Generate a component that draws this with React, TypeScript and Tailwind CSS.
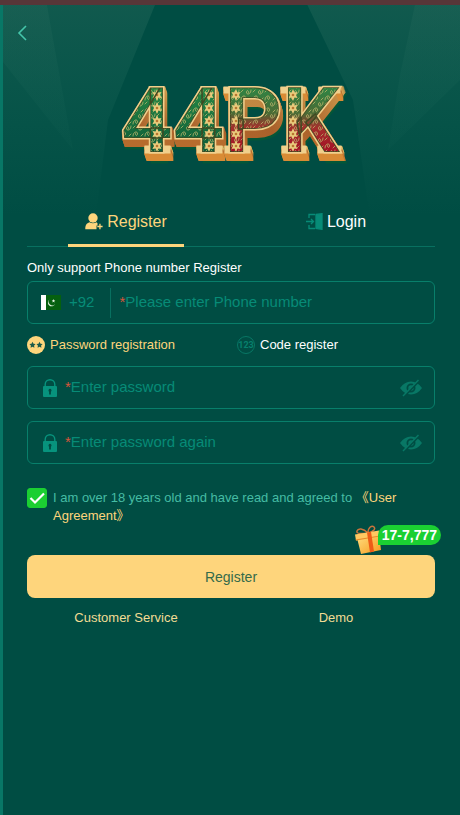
import React, { useState } from 'react';

const FIELD = 'flex h-[43px] items-center rounded-md border border-[#087f6b] text-[15px]';

const Backdrop: React.FC = () => (
  <svg
    className="pointer-events-none absolute inset-x-0 top-0 h-[240px] w-full"
    viewBox="0 0 457 240"
    preserveAspectRatio="none"
    aria-hidden="true"
  >
    <defs>
      <linearGradient id="ray" x1="0" y1="0" x2="0" y2="240" gradientUnits="userSpaceOnUse">
        <stop offset="0" stopColor="#6c9c87" stopOpacity=".16" />
        <stop offset=".5" stopColor="#4f9c84" stopOpacity=".08" />
        <stop offset=".9" stopColor="#4f9c84" stopOpacity="0" />
      </linearGradient>
    </defs>
    <g fill="url(#ray)">
      <path d="M0 0H154L105 120 90 240H0Z" />
      <path d="M0 0H43L70 150 0 62Z" opacity=".5" />
      <path d="M302 0H457V240H370L350 100Z" />
      <path d="M413 0H457V80L385 150 397 75Z" opacity=".5" />
    </g>
  </svg>
);

// x centre of each upright stem in the wordmark
const STEMS = [37, 89, 116, 173];

const Logo: React.FC = () => (
  <svg width="224" height="90" viewBox="0 0 224 90" className="overflow-visible" role="img" aria-label="44PK">
    <defs>
      <linearGradient id="gold" x1="0" y1="0" x2="0" y2="1">
        <stop offset="0" stopColor="#dfb45c" />
        <stop offset=".55" stopColor="#a9602a" />
        <stop offset="1" stopColor="#d98b35" />
      </linearGradient>
      <linearGradient id="green" x1="0" y1="8" x2="0" y2="76" gradientUnits="userSpaceOnUse">
        <stop offset="0" stopColor="#268a45" />
        <stop offset="1" stopColor="#0e5a38" />
      </linearGradient>
      <linearGradient id="greenRed" x1="0" y1="8" x2="0" y2="76" gradientUnits="userSpaceOnUse">
        <stop offset="0" stopColor="#2b8745" />
        <stop offset=".42" stopColor="#4b6b35" />
        <stop offset=".62" stopColor="#a2302c" />
        <stop offset="1" stopColor="#a50d25" />
      </linearGradient>
      <pattern id="scroll" width="12" height="12" patternUnits="userSpaceOnUse">
        <path
          d="M1 11C1 6 6 6 5.500 9S2.500 9.500 3.500 8M11 1C11 6 6 6 6.500 3S9.500 2.500 8.500 4M1 3L3 1M9 11L11 9"
          fill="none"
          stroke="#b9b56b"
          strokeWidth=".8"
          strokeLinecap="round"
        />
      </pattern>
      <g id="floret" fill="#e9cb7c">
        <path d="M0-6L1.500-2.500 4.500-3 3 0 4.500 3 1.500 2.500 0 6-1.500 2.500-4.500 3-3 0-4.500-3-1.500-2.500Z" />
        <circle r="1.300" fill="#b9762f" />
      </g>
      <text id="word" x="1" y="75" fontFamily="Roboto, Arial, sans-serif" fontWeight="700" fontSize="90">44PK</text>
      <g id="slabs">
        <rect x="26" y="70" width="23" height="5" />
        <rect x="78" y="70" width="23" height="5" />
        <rect x="106" y="70" width="23" height="5" />
        <rect x="105" y="11" width="12" height="4" />
        <rect x="163" y="70" width="22" height="5" />
        <rect x="162" y="11" width="22" height="4" />
        <rect x="199" y="70" width="21" height="5" />
        <rect x="200" y="11" width="19" height="4" />
      </g>
      <clipPath id="face">
        <use href="#word" />
      </clipPath>
    </defs>
    <g stroke="#075c30" strokeWidth="5" fill="#075c30" opacity=".6" transform="translate(3 9)">
      <use href="#word" />
    </g>
    {[7, 6, 5, 4, 3, 2, 1].map((d) => (
      <g key={d} transform={`translate(${d / 3} ${d})`} fill="url(#gold)" stroke="url(#gold)" strokeWidth="4">
        <use href="#word" />
        <use href="#slabs" />
      </g>
    ))}
    <g fill="#f0d08c" stroke="#f0d08c" strokeWidth="3">
      <use href="#slabs" />
      <use href="#word" />
    </g>
    <g clipPath="url(#face)">
      <rect width="107" height="90" fill="url(#green)" />
      <rect x="105" width="130" height="90" fill="url(#greenRed)" />
      <rect width="238" height="90" fill="url(#scroll)" />
      {STEMS.map((x) => [18, 31, 44, 57, 69].map((y) => <use key={`${x}-${y}`} href="#floret" x={x} y={y} />))}
      <use href="#word" fill="none" stroke="#3f4a22" strokeWidth="1.500" />
    </g>
  </svg>
);

const UserPlusIcon: React.FC = () => (
  <svg width="18" height="17" viewBox="0 0 18 17" fill="currentColor" aria-hidden="true">
    <circle cx="8" cy="5" r="4.700" />
    <path d="M4.500 9.300C1.500 10.500 .3 12 .3 16.300h11.200V12.500h1V10.200L11.500 9.300Q8 11.300 4.500 9.300Z" />
    <path d="M14.300 10.800h1.300v2h2v1.400h-2v2h-1.300v-2h-2v-1.400h2Z" />
  </svg>
);

const LoginIcon: React.FC = () => (
  <svg width="17" height="17" viewBox="0 0 17 17" fill="none" stroke="#078b77" strokeWidth="1.300" aria-hidden="true">
    <path d="M9 1.500H3V5M3 12v3.500h6M0 8.500h7M5 6l2.500 2.500L5 11" />
    <path d="M10 1.500L16 .7V16.300L10 15.500Z" fill="#078b77" />
  </svg>
);

const FlagIcon: React.FC = () => (
  <svg width="20" height="15" viewBox="0 0 20 15" role="img" aria-label="Pakistan">
    <path d="M0 0H20V15H0Z" fill="#05600f" />
    <path d="M0 0H5V15H0Z" fill="#fff" />
    <path d="M8.500 4.500A3.700 3.700 0 1 0 14 9 3.500 3.500 0 0 1 8.500 4.500Z" fill="#e4f3e2" />
    <path d="M12.500 4l.5 1.200 1.300.1-1 .8.3 1.300-1.100-.7-1.100.7.3-1.300-1-.8 1.300-.1Z" fill="#e4f3e2" />
  </svg>
);

const LockIcon: React.FC = () => (
  <svg width="14" height="18" viewBox="0 0 14 18" className="shrink-0" aria-hidden="true">
    <path d="M2.200 8V5.500a4.800 4.800 0 0 1 9.600 0V8" fill="none" stroke="#07937d" strokeWidth="1.400" />
    <rect y="7" width="14" height="11" rx="1" fill="#07937d" />
    <path d="M7 9.700a1.700 1.700 0 0 1 .9 3V15.500H6.100V12.700A1.700 1.700 0 0 1 7 9.700Z" fill="#004d43" />
  </svg>
);

const EyeOffIcon: React.FC = () => (
  <svg width="22" height="18" viewBox="0 0 22 18" aria-hidden="true">
    <path
      d="M0 9Q4.500 2.500 11 2.500T22 9Q17.500 15.500 11 15.500T0 9ZM11 4.500a4.500 4.500 0 1 0 0 9 4.500 4.500 0 0 0 0-9Z"
      fill="#087765"
      fillRule="evenodd"
    />
    <circle cx="11" cy="9" r="2.700" fill="#087765" />
    <path d="M4.500 17L19 2" stroke="#004d43" strokeWidth="2" />
    <path d="M3 17L18.500 1" stroke="#087765" strokeWidth="1.500" />
  </svg>
);

const StarsIcon: React.FC = () => (
  <svg width="18" height="18" viewBox="0 0 18 18" aria-hidden="true">
    <circle cx="9" cy="9" r="9" fill="#fed57c" />
    <g fill="#1c5b4a">
      <path d="M5.500 5.800l1 2 2.100.3-1.500 1.500.3 2.100-1.900-1-1.900 1 .3-2.100-1.500-1.500 2.100-.3Z" />
      <path d="M12.500 5.800l1 2 2.100.3-1.500 1.500.3 2.100-1.900-1-1.900 1 .3-2.100-1.500-1.500 2.100-.3Z" />
    </g>
  </svg>
);

const CodeIcon: React.FC = () => (
  <svg width="18" height="18" viewBox="0 0 18 18" aria-hidden="true">
    <circle cx="9" cy="9" r="8.500" fill="none" stroke="#087765" />
    <text x="9" y="12" textAnchor="middle" fontSize="9" fontFamily="Roboto, sans-serif" fontWeight="700" fill="#07806d">123</text>
  </svg>
);

const GiftIcon: React.FC = () => (
  <svg width="28" height="30" viewBox="0 0 28 30" aria-hidden="true">
    <defs>
      <linearGradient id="box" x1="0" y1="0" x2="1" y2="1">
        <stop offset="0" stopColor="#ffe083" />
        <stop offset="1" stopColor="#f79a1c" />
      </linearGradient>
    </defs>
    <g fill="none" stroke="#c9743c" strokeWidth="1.500">
      <path d="M14 8C9 3 4 3 3 6s5 3 11 2ZM14 8C14 2 18 0 20 2s-1 5-6 6Z" />
    </g>
    <path d="M3 13L25 9 27 25 7 29Z" fill="url(#box)" />
    <path d="M1 9.500L25 5.500 26 11.500 2 15.500Z" fill="#ffc861" />
    <path d="M1.500 14.500L26 10.500V11.500L2 15.500Z" fill="#e98a28" />
    <path d="M13 7.500L17 6.700 20 26.500 16 27.500Z" fill="#ee5b16" />
  </svg>
);

const PasswordField: React.FC<{ id: string; label: string }> = ({ id, label }) => {
  const [visible, setVisible] = useState(false);
  return (
    <div className={`${FIELD} pl-[15px] pr-3`}>
      <LockIcon />
      <label htmlFor={id} className="ml-2 text-[#d8553a]">*</label>
      <input
        id={id}
        type={visible ? 'text' : 'password'}
        placeholder={label}
        aria-label={label}
        className="min-w-0 flex-1 bg-transparent text-[#5bd0b5] outline-none placeholder:text-[#078b77]"
      />
      <button type="button" aria-label="Show password" onClick={() => setVisible(!visible)}>
        <EyeOffIcon />
      </button>
    </div>
  );
};

const App: React.FC = () => {
  const [agreed, setAgreed] = useState(true);

  return (
    <div className="relative min-h-screen border-l-[3px] border-[#087766] bg-[#004d43] font-['Liberation_Sans',Arial,'Noto_Sans_CJK_SC',sans-serif] text-[13px]">
      <div className="absolute inset-x-0 top-0">
        <Backdrop />
      </div>
      <div className="relative -ml-[3px] h-[5px] bg-[#573638]" />

      <header className="relative px-3 pt-5">
        <button type="button" aria-label="Back" className="block h-4 w-4 text-[#45c5aa]">
          <svg width="16" height="16" viewBox="0 0 16 16" fill="none" stroke="currentColor" strokeWidth="1.600">
            <path d="M11 1L4 8l7 7" />
          </svg>
        </button>
        <div className="mt-9 flex justify-center">
          <Logo />
        </div>
      </header>

      <main className="relative pl-6 pr-[25px] pt-8">
        <nav className="grid grid-cols-2 gap-3 border-b border-[#087060]">
          <button
            type="button"
            className="-mb-px flex h-[48px] w-[116px] items-center justify-center gap-1 justify-self-center border-b-[3px] border-[#fed57c] text-base text-[#fed57c]"
          >
            <UserPlusIcon />
            Register
          </button>
          <button
            type="button"
            className="flex h-[45px] w-[116px] items-center justify-center gap-1 justify-self-center text-base text-white"
          >
            <LoginIcon />
            Login
          </button>
        </nav>

        <form onSubmit={(e) => e.preventDefault()}>
          <label htmlFor="phone" className="mt-[11px] block leading-5 text-white">
            Only support Phone number Register
          </label>
          <div className={`${FIELD} mt-[3px] pl-[13px] pr-3`}>
            <FlagIcon />
            <span className="ml-2 text-[#078b77]">+92</span>
            <span className="ml-4 mr-2 h-[30px] w-px bg-[#087060]" />
            <span className="text-[#d8553a]">*</span>
            <input
              id="phone"
              type="tel"
              placeholder="Please enter Phone number"
              className="min-w-0 flex-1 bg-transparent text-[#5bd0b5] outline-none placeholder:text-[#078b77]"
            />
          </div>

          <div className="grid h-[42px] grid-cols-2 items-center gap-3">
            <label className="flex items-center gap-[5px] text-[#fed57c]">
              <input type="radio" name="mode" defaultChecked className="sr-only" />
              <StarsIcon />
              Password registration
            </label>
            <label className="flex items-center gap-[5px] text-white">
              <input type="radio" name="mode" className="sr-only" />
              <CodeIcon />
              Code register
            </label>
          </div>

          <div className="flex flex-col gap-3">
            <PasswordField id="password" label="Enter password" />
            <PasswordField id="password-again" label="Enter password again" />
          </div>

          <div className="mt-6 flex items-start gap-[6px] leading-[18px]">
            <span className="relative h-5 w-5 shrink-0">
              <input
                id="agree"
                type="checkbox"
                checked={agreed}
                onChange={(e) => setAgreed(e.target.checked)}
                className="block h-5 w-5 appearance-none rounded-[3px] border border-[#1bcf32] checked:bg-[#1bcf32]"
              />
              {agreed && (
                <svg className="pointer-events-none absolute inset-0" width="20" height="20" viewBox="0 0 20 20" fill="none" stroke="#fff" strokeWidth="2.200">
                  <path d="M3.500 10L8 14.500 17 5.500" />
                </svg>
              )}
            </span>
            <div className="flex-1 pr-5 pt-px text-[#45bca4]">
              <label htmlFor="agree">I am over 18 years old and have read and agreed to </label>
              <a href="#agreement" className="text-[#fed57c]">《User Agreement》</a>
            </div>
          </div>

          <div className="relative mt-[30px]">
            <button type="submit" className="h-[43px] w-full rounded-lg bg-[#fed57c] text-sm text-[#356b4a]">
              Register
            </button>
            <div className="absolute -right-[6px] -top-[30px] flex items-start">
              <GiftIcon />
              <span className="-ml-1 rounded-r-full rounded-tl-full bg-[#1bcf32] px-1 text-sm font-bold leading-5 text-white">
                17-7,777
              </span>
            </div>
          </div>
        </form>

        <div className="mt-[10px] grid grid-cols-2 gap-3 text-center leading-5 text-[#f2dc94]">
          <a href="#service">Customer Service</a>
          <a href="#demo">Demo</a>
        </div>
      </main>
    </div>
  );
};

export default App;
